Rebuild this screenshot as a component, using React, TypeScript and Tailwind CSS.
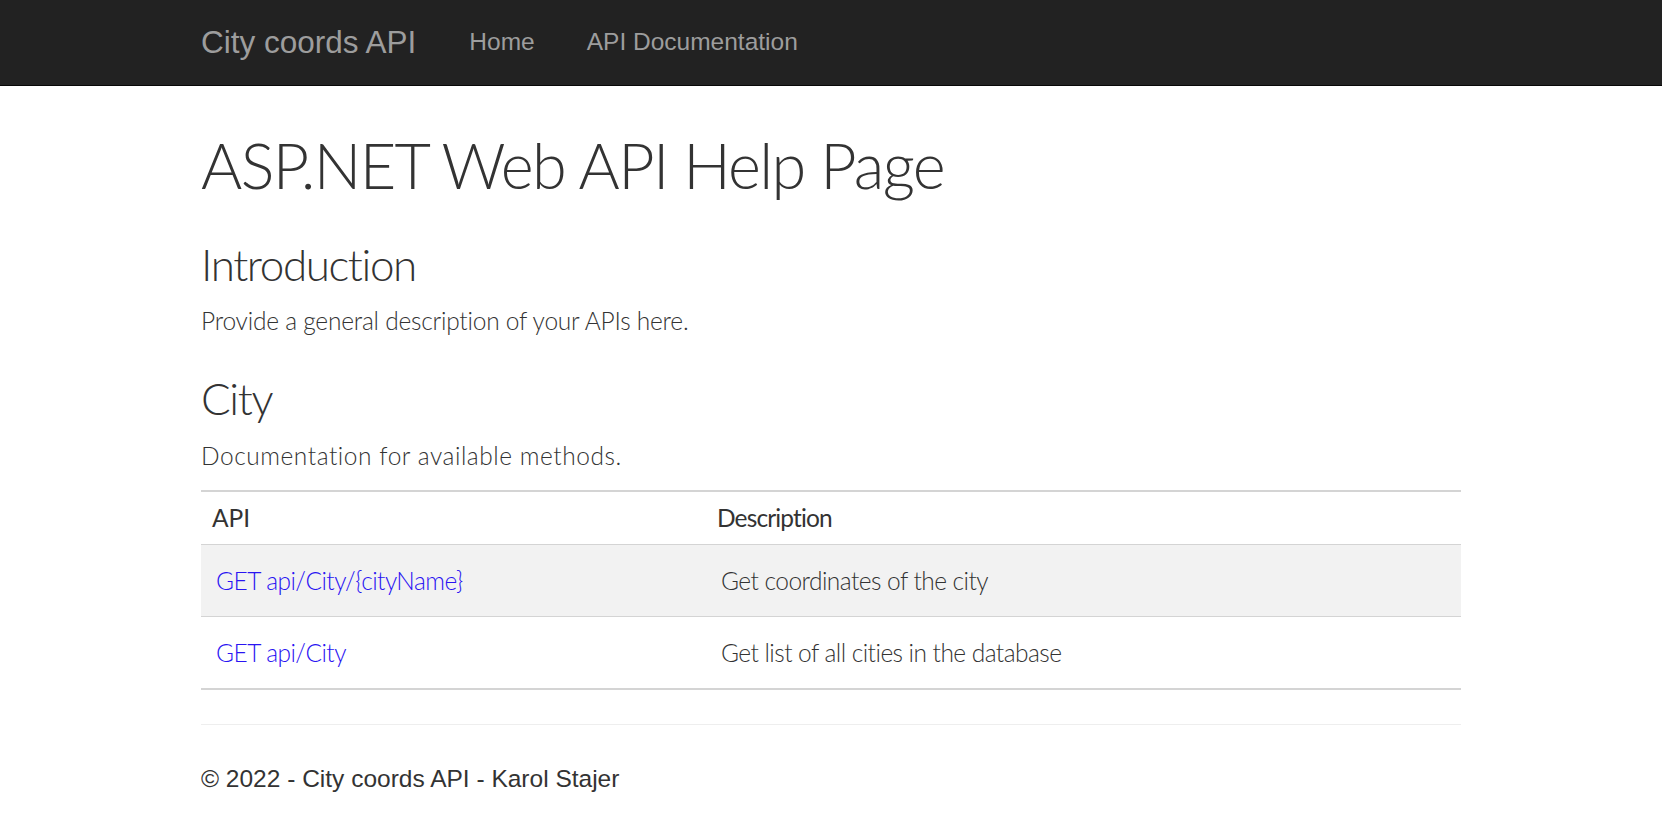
import React from 'react';

// Help page for the City coords API
const rows = [
  { api: 'GET api/City/{cityName}', description: 'Get coordinates of the city' },
  { api: 'GET api/City', description: 'Get list of all cities in the database' },
];

const light = "font-['Lato','Open_Sans',sans-serif] font-light";

const App: React.FC = () => {
  return (
    <div className="min-h-screen bg-white text-[#333]">
      <nav className="h-[86px] bg-[#222] border-b border-[#080808]">
        <div className="mx-auto flex h-full w-[1312px] items-center px-[26px] font-['Liberation_Sans',Arial,sans-serif] text-[#9d9d9d]">
          <a href="#" className="text-[31.5px] leading-none">City coords API</a>
          <a href="#" className="ml-[53px] text-[24.5px] leading-none">Home</a>
          <a href="#" className="ml-[52px] text-[24.5px] leading-none">API Documentation</a>
        </div>
      </nav>

      <div className="mx-auto w-[1312px] px-[26px]">
        <h1 className={`${light} mt-[44px] text-[63px] leading-[69px] tracking-[-0.026em] text-[#333]`}>ASP.NET Web API Help Page</h1>

        <h2 className={`${light} mt-[41px] text-[44px] leading-[48px] tracking-[-0.032em]`}>Introduction</h2>
        <p className={`${light} mt-[15px] text-[24.5px] leading-[35px] tracking-[-0.009em]`}>Provide a general description of your APIs here.</p>

        <h2 className={`${light} mt-[36px] text-[44px] leading-[48px] tracking-[-0.032em]`}>City</h2>
        <p className={`${light} mt-[16px] text-[24.5px] leading-[35px] tracking-[0.022em]`}>Documentation for available methods.</p>

        <div className="mt-[17px] border-t-2 border-b-2 border-[#d4d4d4]">
          <div className="grid grid-cols-[502px_1fr] border-b border-[#d4d4d4] py-[8px] pb-[9px] font-['Lato','Open_Sans',sans-serif] text-[24.5px] leading-[35px] text-[#333]">
            <div className="pl-[11px]">API</div>
            <div className="pl-[14px] tracking-[-0.035em]">Description</div>
          </div>
          {rows.map((row, i) => (
            <div
              key={row.api}
              className={`grid grid-cols-[502px_1fr] py-[18px] text-[24.5px] leading-[35px] tracking-[-0.022em] ${light} ${
                i === 0 ? 'bg-[#f2f2f2] border-b border-[#d4d4d4]' : ''
              }`}
            >
              <div className="pl-[15px]">
                <a href="#" className="text-[#2a14f2]">{row.api}</a>
              </div>
              <div className="pl-[18px] text-[#333]">{row.description}</div>
            </div>
          ))}
        </div>

        <hr className="mt-[34px] border-t border-[#eee]" />
        <footer className="mt-[36px] font-['Liberation_Sans',Arial,sans-serif] text-[24.5px] leading-[35px] text-[#333]">
          <p>&copy; 2022 - City coords API - Karol Stajer</p>
        </footer>
      </div>
    </div>
  );
};

export default App;
